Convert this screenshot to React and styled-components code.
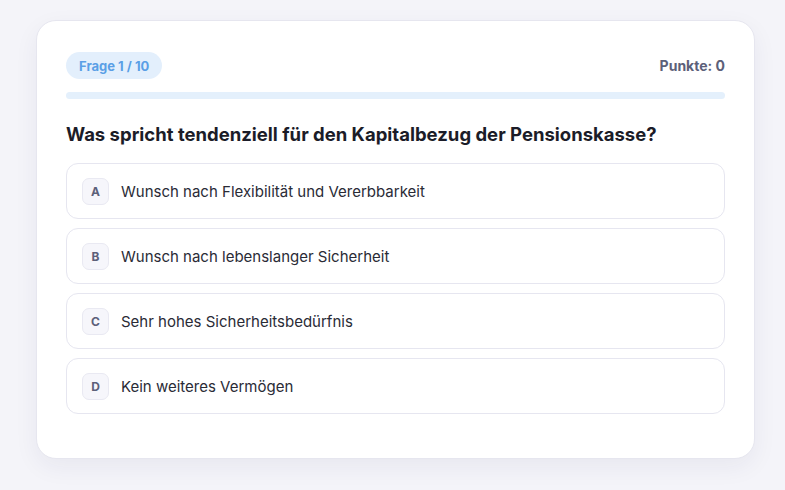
import styled, { createGlobalStyle } from 'styled-components'

const GlobalStyle = createGlobalStyle`
    html, body {
        margin: 0;
        background: #f4f4f9;
        font-family: Inter, "Noto Sans", sans-serif;
    }
`

const Page = styled.div`
    padding: 20px 30px 30px 36px;
`

const Card = styled.div`
    background: #ffffff;
    border: 1px solid #e6e6ef;
    border-radius: 20px;
    box-shadow: 0 8px 24px rgba(40, 40, 80, 0.06);
    padding: 31px 29px 44px;
`

const Header = styled.div`
    display: flex;
    align-items: center;
    justify-content: space-between;
`

const Pill = styled.span`
    display: inline-flex;
    align-items: center;
    height: 27px;
    padding: 0 13px;
    border-radius: 14px;
    background: #e3effc;
    color: #5a9fe6;
    font-size: 13px;
    font-weight: 700;
`

const Score = styled.span`
    color: #5c6079;
    font-size: 14px;
    font-weight: 700;
`

const Track = styled.div`
    margin-top: 13px;
    height: 7px;
    border-radius: 4px;
    background: #e4f0fc;
    overflow: hidden;
`

const Fill = styled.div`
    height: 100%;
    background: #5a9fe6;
`

const Question = styled.h2`
    margin: 22px 0 16px;
    font-size: 18.5px;
    line-height: 26px;
    font-weight: 700;
    color: #1b1c28;
`

const Options = styled.div`
    display: flex;
    flex-direction: column;
    gap: 9px;
`

const Option = styled.div`
    display: flex;
    align-items: center;
    gap: 12px;
    height: 56px;
    box-sizing: border-box;
    padding: 0 15px;
    border: 1px solid #e6e6f0;
    border-radius: 12px;
    background: #fff;
    color: #2a2b36;
    font-size: 15px;
`

const Letter = styled.span`
    display: flex;
    align-items: center;
    justify-content: center;
    width: 27px;
    height: 27px;
    box-sizing: border-box;
    border: 1px solid #e9e9f2;
    border-radius: 7px;
    background: #f6f6fb;
    color: #5c6079;
    font-size: 12px;
    font-weight: 700;
`

const answers = [
    'Wunsch nach Flexibilität und Vererbbarkeit',
    'Wunsch nach lebenslanger Sicherheit',
    'Sehr hohes Sicherheitsbedürfnis',
    'Kein weiteres Vermögen',
]

const App = () => (
    <Page>
        <GlobalStyle />
        <Card>
            <Header>
                <Pill>Frage 1 / 10</Pill>
                <Score>Punkte: 0</Score>
            </Header>
            <Track>
                <Fill style={{ width: '0%' }} />
            </Track>
            <Question>Was spricht tendenziell für den Kapitalbezug der Pensionskasse?</Question>
            <Options>
                {answers.map((text, i) => (
                    <Option key={text}>
                        <Letter>{'ABCD'[i]}</Letter>
                        {text}
                    </Option>
                ))}
            </Options>
        </Card>
    </Page>
)

export default App
